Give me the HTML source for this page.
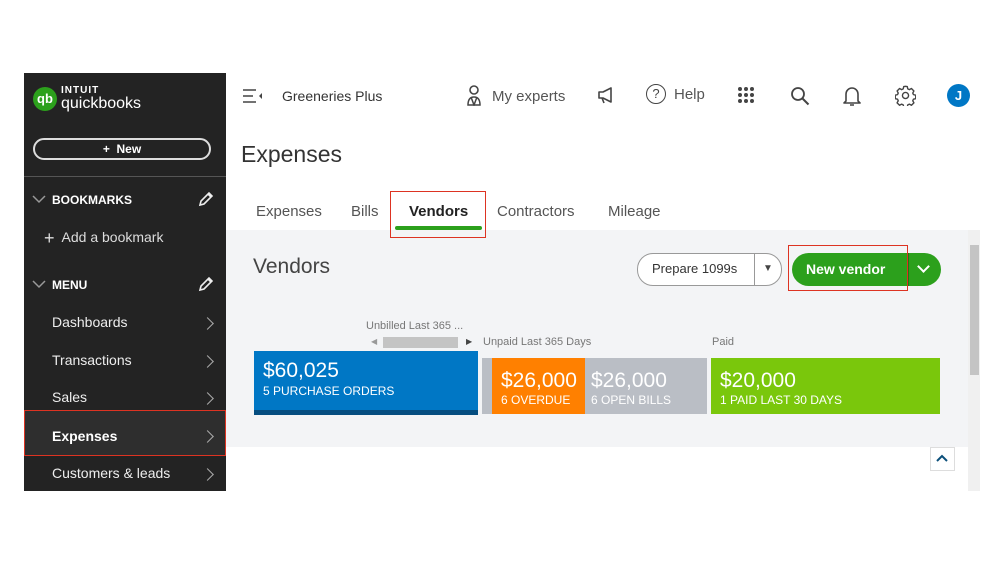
<!DOCTYPE html><html><head><style>
body{margin:0;width:999px;height:562px;background:#fff;position:relative;font-family:"Liberation Sans",sans-serif;overflow:hidden}
.a{position:absolute}
.sb{left:24px;top:73px;width:202px;height:418px;background:#232323;color:#fff}
.it{position:absolute;left:28px;font-size:14px;color:#eee}
.chev{position:absolute;right:14px;width:8px;height:8px;border-right:1.6px solid #aaa;border-top:1.6px solid #aaa;transform:rotate(45deg)}
.tab{position:absolute;top:203px;font-size:15px;color:#555}
svg.ic{position:absolute;top:84px}
</style></head><body>
<div class="a sb">
 <div class="a" style="left:9px;top:14px;width:24px;height:24px;border-radius:50%;background:#2ca01c;color:#fff;font-size:13px;font-weight:bold;text-align:center;line-height:23px">qb</div>
 <div class="a" style="left:37px;top:12px;font-size:10px;font-weight:bold;letter-spacing:1px">INTUIT</div>
 <div class="a" style="left:37px;top:22px;font-size:16px">quickbooks</div>
 <div class="a" style="left:9px;top:65px;width:174px;height:18px;border:2px solid #ddd;border-radius:12px;text-align:center;font-size:12px;font-weight:bold;line-height:18px">+ &nbsp;New</div>
 <div class="a" style="left:0;top:103px;width:202px;height:1px;background:#555"></div>
 <svg class="a" style="left:8px;top:122px" width="14" height="9"><path d="M1 1l6 6 6-6" stroke="#999" stroke-width="1.5" fill="none"/></svg>
 <div class="a" style="left:28px;top:120px;font-size:12px;font-weight:bold">BOOKMARKS</div>
 <svg class="a" style="left:174px;top:118px" width="16" height="16"><path d="M2 14l1-4 8-8 3 3-8 8z M10 3l3 3" stroke="#eee" stroke-width="1.6" fill="none"/></svg>
 <div class="a" style="left:20px;top:155px;font-size:14px;color:#ddd"><span style="font-size:18px;vertical-align:-2px">+</span>&nbsp; Add a bookmark</div>
 <svg class="a" style="left:8px;top:207px" width="14" height="9"><path d="M1 1l6 6 6-6" stroke="#999" stroke-width="1.5" fill="none"/></svg>
 <div class="a" style="left:28px;top:205px;font-size:12px;font-weight:bold">MENU</div>
 <svg class="a" style="left:174px;top:203px" width="16" height="16"><path d="M2 14l1-4 8-8 3 3-8 8z M10 3l3 3" stroke="#eee" stroke-width="1.6" fill="none"/></svg>
 <div class="it" style="top:241px">Dashboards</div><div class="chev" style="top:246px"></div>
 <div class="it" style="top:279px">Transactions</div><div class="chev" style="top:284px"></div>
 <div class="it" style="top:316px">Sales</div><div class="chev" style="top:321px"></div>
 <div class="a" style="left:0;top:337px;width:200px;height:44px;border:1px solid #d32;background:#2e2e2e"></div>
 <div class="it" style="top:355px;font-weight:bold;color:#fff">Expenses</div><div class="chev" style="top:359px"></div>
 <div class="it" style="top:392px">Customers &amp; leads</div><div class="chev" style="top:397px"></div>
</div>
<svg class="ic" style="left:243px;top:89px" width="20" height="14"><path d="M0 1h13M0 7h10M0 13h13" stroke="#444" stroke-width="1.6"/><path d="M19 4l-3 3 3 3z" fill="#444"/></svg>
<div class="a" style="left:282px;top:88px;font-size:14px;color:#333">Greeneries Plus</div>
<svg class="ic" style="left:466px" width="16" height="22"><circle cx="8" cy="6" r="4" stroke="#444" stroke-width="1.6" fill="none"/><path d="M2 21c0-5 2-8 6-8s6 3 6 8z M5 13l3 8 3-8" stroke="#444" stroke-width="1.5" fill="none"/></svg>
<div class="a" style="left:492px;top:88px;font-size:15px;color:#555">My experts</div>
<svg class="ic" style="left:597px;top:86px" width="18" height="18"><path d="M2 6h4l8-4v14l-8-4H2z M5 12l2 5" stroke="#444" stroke-width="1.6" fill="none" stroke-linejoin="round"/></svg>
<div class="a" style="left:646px;top:84px;width:18px;height:18px;border:1.5px solid #444;border-radius:50%;text-align:center;font-size:13px;line-height:18px;color:#444">?</div>
<div class="a" style="left:674px;top:86px;font-size:15px;color:#555">Help</div>
<svg class="ic" style="left:738px;top:87px" width="17" height="17"><g fill="#444"><circle cx="2" cy="2" r="2"/><circle cx="8" cy="2" r="2"/><circle cx="14" cy="2" r="2"/><circle cx="2" cy="8" r="2"/><circle cx="8" cy="8" r="2"/><circle cx="14" cy="8" r="2"/><circle cx="2" cy="14" r="2"/><circle cx="8" cy="14" r="2"/><circle cx="14" cy="14" r="2"/></g></svg>
<svg class="ic" style="left:790px;top:86px" width="20" height="20"><circle cx="8" cy="8" r="6" stroke="#444" stroke-width="1.8" fill="none"/><path d="M12.5 12.5l6 6" stroke="#444" stroke-width="2"/></svg>
<svg class="ic" style="left:843px;top:85px" width="18" height="22"><path d="M3 16V9a6 6 0 0 1 12 0v7l2 2H1z M7 20h4" stroke="#444" stroke-width="1.6" fill="none" stroke-linejoin="round"/></svg>
<svg class="ic" style="left:895px;top:85px" width="21" height="21" viewBox="0 0 24 24"><path d="M12 1.5l2 .3.6 2.6 1.8.9 2.4-1.3 2.8 2.8-1.3 2.4.8 1.8 2.6.6v4l-2.6.6-.8 1.8 1.3 2.4-2.8 2.8-2.4-1.3-1.8.8-.6 2.6h-4l-.6-2.6-1.8-.8-2.4 1.3-2.8-2.8 1.3-2.4-.8-1.8-2.6-.6v-4l2.6-.6.8-1.8-1.3-2.4 2.8-2.8 2.4 1.3 1.8-.9.6-2.6z" stroke="#444" stroke-width="1.6" fill="none" stroke-linejoin="round"/><circle cx="12" cy="12" r="3.5" stroke="#444" stroke-width="1.6" fill="none"/></svg>
<div class="a" style="left:947px;top:84px;width:23px;height:23px;border-radius:50%;background:#0077c5;color:#fff;text-align:center;line-height:23px;font-weight:bold;font-size:13px">J</div>
<div class="a" style="left:241px;top:141px;font-size:23px;color:#333">Expenses</div>
<div class="tab" style="left:256px">Expenses</div>
<div class="tab" style="left:351px">Bills</div>
<div class="tab" style="left:409px;color:#222;font-weight:bold">Vendors</div>
<div class="tab" style="left:497px">Contractors</div>
<div class="tab" style="left:608px">Mileage</div>
<div class="a" style="left:226px;top:230px;width:742px;height:217px;background:#f3f4f6"></div>
<div class="a" style="left:390px;top:191px;width:94px;height:45px;border:1px solid #d32"></div>
<div class="a" style="left:395px;top:226px;width:87px;height:4px;background:#2ca01c;border-radius:2px"></div>
<div class="a" style="left:968px;top:230px;width:12px;height:261px;background:#f0f0f0"></div>
<div class="a" style="left:970px;top:245px;width:9px;height:130px;background:#c4c4c4"></div>
<div class="a" style="left:253px;top:255px;font-size:21px;color:#444">Vendors</div>
<div class="a" style="left:637px;top:253px;width:143px;height:31px;border:1px solid #999;border-radius:16px;background:#fff"></div>
<div class="a" style="left:652px;top:261px;font-size:13px;color:#333">Prepare 1099s</div>
<div class="a" style="left:754px;top:253px;width:1px;height:33px;background:#999"></div>
<div class="a" style="left:763px;top:263px;font-size:10px;color:#444">&#9660;</div>
<div class="a" style="left:792px;top:253px;width:149px;height:33px;border-radius:17px;background:#2ca01c"></div>
<div class="a" style="left:806px;top:261px;font-size:14px;font-weight:bold;color:#fff">New vendor</div>
<div class="a" style="left:908px;top:253px;width:1px;height:33px;background:#1e7a12"></div>
<div class="a" style="left:919px;top:262px;width:7px;height:7px;border-right:2.5px solid #fff;border-bottom:2.5px solid #fff;transform:rotate(45deg)"></div>
<div class="a" style="left:788px;top:245px;width:118px;height:44px;border:1px solid #d32"></div>
<div class="a" style="left:366px;top:320px;font-size:11px;color:#777">Unbilled Last 365 ...</div>
<div class="a" style="left:383px;top:337px;width:75px;height:11px;background:#c4c4c4"></div>
<div class="a" style="left:371px;top:337px;font-size:8px;color:#999">&#9664;</div>
<div class="a" style="left:466px;top:337px;font-size:8px;color:#444">&#9654;</div>
<div class="a" style="left:483px;top:336px;font-size:11px;color:#777">Unpaid Last 365 Days</div>
<div class="a" style="left:712px;top:336px;font-size:11px;color:#777">Paid</div>
<div class="a" style="left:254px;top:351px;width:224px;height:64px;background:#0077c5;color:#fff">
 <div style="position:absolute;bottom:0;left:0;right:0;height:5px;background:#054d80"></div>
 <div style="position:absolute;left:9px;top:8px;font-size:21px">$60,025</div>
 <div style="position:absolute;left:9px;top:33px;font-size:12px">5 PURCHASE ORDERS</div></div>
<div class="a" style="left:482px;top:358px;width:10px;height:56px;background:#babec5"></div>
<div class="a" style="left:492px;top:358px;width:93px;height:56px;background:#ff8000;color:#fff">
 <div style="position:absolute;left:9px;top:11px;font-size:21px">$26,000</div>
 <div style="position:absolute;left:9px;top:35px;font-size:12px">6 OVERDUE</div></div>
<div class="a" style="left:585px;top:358px;width:122px;height:56px;background:#babec5;color:#fff">
 <div style="position:absolute;left:6px;top:11px;font-size:21px">$26,000</div>
 <div style="position:absolute;left:6px;top:35px;font-size:12px">6 OPEN BILLS</div></div>
<div class="a" style="left:711px;top:358px;width:229px;height:56px;background:#7ac70c;color:#fff">
 <div style="position:absolute;left:9px;top:11px;font-size:21px">$20,000</div>
 <div style="position:absolute;left:9px;top:35px;font-size:12px">1 PAID LAST 30 DAYS</div></div>
<div class="a" style="left:930px;top:447px;width:23px;height:22px;background:#fff;border:1px solid #ddd"></div>
<svg class="a" style="left:936px;top:454px" width="12" height="8"><path d="M1 7l5-5 5 5" stroke="#0b4f7a" stroke-width="2" fill="none"/></svg>
</body></html>
